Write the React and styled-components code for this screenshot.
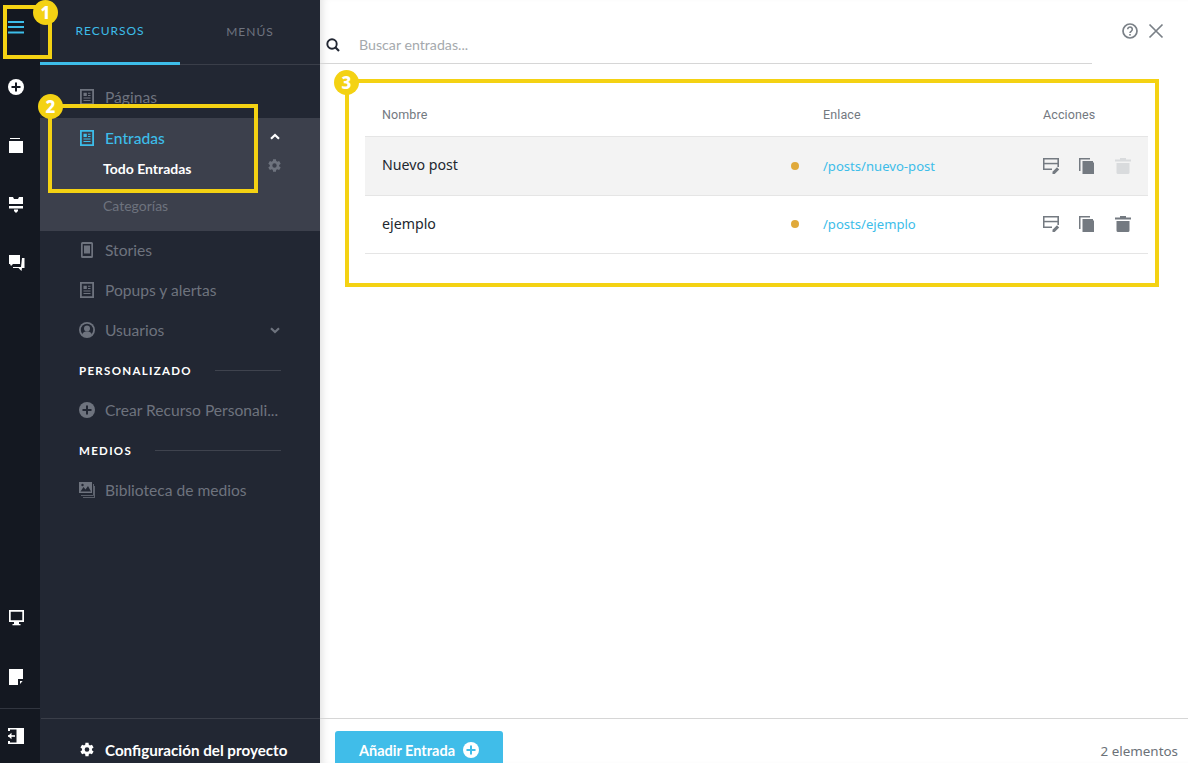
import React from "react";
import styled, { createGlobalStyle } from "styled-components";

const Global = createGlobalStyle`
  html, body { margin: 0; padding: 0; height: 763px; overflow: hidden; background: #fff; }
  #root { height: 763px; }
  * { box-sizing: border-box; }
`;
const Page = styled.div`
  position: relative; display: flex; width: 1188px; height: 763px; overflow: hidden;
  font-family: Lato, "Noto Sans", sans-serif;
`;
const Rail = styled.nav`
  width: 40px; flex: none; background: #141821; display: flex; flex-direction: column; align-items: center;
`;
const RailItem = styled.div`
  width: 40px; height: ${p => p.$h || 59}px; flex: none; display: flex; align-items: center; justify-content: center; color: #fff;
  padding-bottom: ${p => p.$pb || 0}px; padding-right: 8px;
`;
const RailBottom = styled.div`
  margin-top: auto; width: 40px; display: flex; flex-direction: column;
`;
const RailExit = styled(RailItem)`
  border-top: 1px solid #31353f; height: 55px; margin-top: 1px;
`;
const Sidebar = styled.aside`
  width: 280px; flex: none; background: #222733; display: flex; flex-direction: column; position: relative; z-index: 2;
`;
const Tabs = styled.div`
  display: flex; height: 65px; flex: none; border-bottom: 1px solid #3a3e49;
`;
const Tab = styled.div`
  width: 140px; height: 65px; display: flex; align-items: center; justify-content: center; padding-bottom: 2px;
  font-size: 12px; letter-spacing: 1px; font-weight: 400;
  color: ${p => p.$active ? "#3dbde9" : "#6f7480"};
  border-bottom: ${p => p.$active ? "3px solid #3dbde9" : "none"};
`;
const Menu = styled.div`
  padding-top: 12px; display: flex; flex-direction: column; flex: 1;
`;
const Item = styled.div`
  height: 40px; flex: none; display: flex; align-items: center; gap: 10px; padding: 0 39px;
  font-size: 15.6px; color: ${p => p.$active ? "#3dbde9" : "#6e737e"};
  font-weight: ${p => p.$active ? 500 : 400};
  justify-content: flex-start;
`;
const ItemIcon = styled.span`
  width: 16px; height: 16px; flex: none; display: flex; align-items: center; justify-content: center;
`;
const ItemText = styled.span`
  flex: 1; white-space: nowrap;
`;
const Active = styled.div`
  background: #3c404c; height: 113px; flex: none; margin: 1px 0 -1px; position: relative;
`;
const ActiveItem = styled(Item)`
  height: 39px;
`;
const SubItem = styled.div`
  height: ${p => p.$h}px; padding-left: 63px; display: flex; align-items: center;
  font-size: 14px; font-weight: ${p => p.$on ? 700 : 400}; color: ${p => p.$on ? "#fff" : "#6e737e"};
`;
const FloatingControl = styled.span`
  position: absolute; left: ${p => p.$left}px; top: ${p => p.$top}px; color: ${p => p.$c}; display: flex;
`;
const UsersCaret = styled.span`
  display: flex; color: #6e737e; margin-right: 1px;
`;
const Section = styled.div`
  height: 40px; flex: none; display: flex; align-items: center; gap: 23px; padding: 0 39px;
  font-size: 11.5px; font-weight: 700; letter-spacing: 1.3px; color: #fff;
  &::after { content: ""; flex: 1; height: 1px; background: #3f434e; }
`;
const Foot = styled.div`
  height: 45px; flex: none; margin-left: 1px; border-top: 1px solid #3a3e49; display: flex; align-items: center; gap: 10px;
  padding: 17px 38px 0; color: #fff; font-size: 15.2px; font-weight: 700; white-space: nowrap;
`;
const Main = styled.main`
  flex: 1; min-width: 0; display: flex; flex-direction: column; position: relative;
  box-shadow: inset 8px 0 8px -6px rgba(0,0,0,.13);
`;
const SearchRow = styled.div`
  height: 64px; flex: none; margin-right: 96px; border-bottom: 1px solid #d6d6d6; display: flex; align-items: center; gap: 19px;
  padding: 26px 0 0 6px; color: #a5a9ad; font-size: 14.2px;
`;
const TopActions = styled.div`
  position: absolute; right: 24px; top: 23px; display: flex; align-items: center; gap: 10px; color: #7a8087;
`;
const TableWrap = styled.div`
  margin: 28px 40px 0 45px; flex: none;
`;
const Row = styled.div`
  display: grid; grid-template-columns: 409px 32px 220px 1fr; align-items: center; height: ${p => p.$h}px;
  padding-left: 17px; background: ${p => p.$bg || "transparent"}; border-bottom: 1px solid #e5e5e5;
  font-family: Roboto, sans-serif;
`;
const Head = styled.span`
  font-size: 12.5px; color: #73797f; letter-spacing: .12px;
`;
const Name = styled.span`
  font-family: "Noto Sans", sans-serif; font-size: 14.2px; color: #22272e; margin-top: -3px;
`;
const Dot = styled.span`
  width: 8px; height: 8px; border-radius: 50%; background: #e0a93a; margin-top: -1px;
`;
const LinkText = styled.span`
  font-size: 13.1px; color: #3dbde9; font-family: "Noto Sans", sans-serif; margin-top: -1px;
`;
const Actions = styled.div`
  display: flex; gap: 19px; align-items: center; margin-top: -1px;
`;
const Footer = styled.div`
  margin-top: auto; height: 45px; flex: none; border-top: 1px solid #d6d6d6; display: flex; align-items: flex-start;
  justify-content: space-between; padding: 12px 10px 0 15px;
`;
const AddButton = styled.div`
  width: 168px; height: 50px; border-radius: 3px; background: #40bde9; color: #fff; font-size: 14.5px; font-weight: 700;
  display: flex; justify-content: center; gap: 8px; padding-top: 11px; line-height: 18px;
`;
const Count = styled.span`
  font-size: 13.4px; color: #6b7178; padding-top: 11px; font-family: "Noto Sans", sans-serif;
`;
const Mark = styled.div`
  position: absolute; left: ${p => p.$x}px; top: ${p => p.$y}px; width: ${p => p.$w}px; height: ${p => p.$h}px;
  border: 4px solid #f4d213; z-index: 5; pointer-events: none;
`;
const Badge = styled.div`
  position: absolute; left: ${p => p.$x}px; top: ${p => p.$y}px; width: 25px; height: 25px; border-radius: 50%;
  background: #f4d213; color: #fff; z-index: 6; display: flex; align-items: center; justify-content: center;
  font-family: "Noto Sans", sans-serif; font-weight: 800; font-size: 17px;
`;

const S = ({ s = 16, children, vb = "0 0 24 24" }) => (
  <svg width={s} height={s} viewBox={vb} fill="currentColor" style={{ display: "block" }}>{children}</svg>
);
const Burger = () => (
  <svg width="16" height="13" viewBox="0 0 16 13" fill="#3dbde9" style={{ display: "block" }}>
    <rect y="0" width="16" height="2" /><rect y="5" width="16" height="2" /><rect y="10.500" width="16" height="2" />
  </svg>
);
const PlusCircle = ({ s = 16, fg = "#141821" }) => (
  <svg width={s} height={s} viewBox="0 0 16 16" style={{ display: "block" }}>
    <circle cx="8" cy="8" r="8" fill="currentColor" />
    <rect x="3.500" y="7" width="9" height="2" fill={fg} /><rect x="7" y="3.500" width="2" height="9" fill={fg} />
  </svg>
);
const Layers = () => (
  <S s={16} vb="0 0 16 16"><rect x="2" y="0" width="10" height="1" /><rect x="1" y="3" width="14" height="12" /></S>
);
const Brush = () => (
  <S s={16} vb="0 0 16 16">
    <path d="M1 0h4l1 2h4l1-2h4v7H1z" /><rect x="1" y="9" width="14" height="2.500" /><path d="M6 12.500h4V14l-2 2-2-2z" />
  </S>
);
const Chat = () => (
  <S s={17} vb="0 0 17 17">
    <path d="M1 0h11v9H5l-2 2-1-2H1z" /><path d="M14 3h2.500v10H14l-.5 3-3-3H5v-1h8z" />
  </S>
);
const Monitor = () => (
  <S s={17} vb="0 0 17 17">
    <path fillRule="evenodd" d="M1 1h15v12H1zM2.700 2.700v8.600h11.600V2.700z" /><rect x="6" y="13" width="5" height="2" /><rect x="4.500" y="15" width="8" height="1.300" />
  </S>
);
const Note = () => (
  <S s={16} vb="0 0 16 16"><path d="M1 0h14v10h-5v6H1z" /><path d="M12 12h2.600L12 15z" /></S>
);
const Exit = () => (
  <S s={16} vb="0 0 16 16">
    <path fillRule="evenodd" d="M0 0h16v16H0v-3h2v1.500h6.500v-13H2V3H0z" />
    <path d="M0 7.200h7v1.600H0z" /><path d="M0 8l3.500-3.200v6.400z" />
  </S>
);
const Doc = () => (
  <svg width="14" height="16" viewBox="0 0 14 16" style={{ display: "block" }}>
    <path fill="currentColor" fillRule="evenodd" d="M0 0h14v16H0zM1.800 1.800v12.400h10.400V1.800z" />
    <path fill="currentColor" d="M3.500 3.700h3.300v3.400H3.500zM8 3.700h2.500v1H8zM8 6h2.500v1H8zM3.500 8.600h7v1h-7zM3.500 11h7v1h-7z" />
  </svg>
);
const Phone = () => (
  <svg width="12" height="16" viewBox="0 0 12 16" style={{ display: "block" }}>
    <path fill="currentColor" fillRule="evenodd" d="M1.500 0h9A1.500 1.500 0 0 1 12 1.500v13a1.500 1.500 0 0 1-1.500 1.500h-9A1.500 1.500 0 0 1 0 14.500v-13A1.500 1.500 0 0 1 1.500 0zM1.700 2v12h8.600V2z" />
    <rect fill="currentColor" x="3" y="3.500" width="6" height="8" />
  </svg>
);
const User = () => (
  <svg width="16" height="16" viewBox="0 0 16 16" style={{ display: "block" }}>
    <circle cx="8" cy="8" r="8" fill="currentColor" />
    <circle cx="8" cy="8" r="6.200" fill="#222733" />
    <circle cx="8" cy="6.500" r="3" fill="currentColor" />
    <path fill="currentColor" d="M3 12.500c1-2.500 3-3 5-3s4 .5 5 3L10.500 15h-5z" />
  </svg>
);
const Media = () => (
  <svg width="16" height="16" viewBox="0 0 16 16" style={{ display: "block" }}>
    <path fill="currentColor" d="M0 0h13v11H0z" />
    <path fill="#222733" d="M1.500 9.500 4.500 5l2 2.500L9 4l3 5.500z" />
    <circle cx="3.500" cy="3" r="1.200" fill="#222733" />
    <path fill="currentColor" d="M14 2h.8v11.800H2V13h12zM15.200 4h.8v11.800H4V15h11.200z" />
  </svg>
);
const Gear = ({ s = 16 }) => (
  <S s={s} vb="0 0 24 24">
    <path d="M19.400 13a7.500 7.500 0 0 0 0-2l2.500-2-2.500-4.300-3 1.200a7.500 7.500 0 0 0-1.700-1L14.300 2H9.700l-.4 2.900a7.500 7.500 0 0 0-1.700 1l-3-1.200L2.100 9l2.500 2a7.500 7.500 0 0 0 0 2l-2.500 2 2.500 4.300 3-1.200a7.500 7.500 0 0 0 1.700 1l.4 2.900h4.600l.4-2.900a7.500 7.500 0 0 0 1.700-1l3 1.200 2.500-4.300zM12 15.500a3.500 3.500 0 1 1 0-7 3.500 3.500 0 0 1 0 7z" />
  </S>
);
const Chevron = ({ up }) => (
  <svg width="10" height="7" viewBox="0 0 10 7" style={{ display: "block", transform: up ? "rotate(180deg)" : "none" }}>
    <path d="M1 1.200 5 5l4-3.800" fill="none" stroke="currentColor" strokeWidth="2.200" />
  </svg>
);
const Search = () => (
  <svg width="14" height="14" viewBox="0 0 14 14" style={{ display: "block" }}>
    <circle cx="6" cy="6" r="4.700" fill="none" stroke="#222733" strokeWidth="1.900" />
    <path d="M9.300 9.300 13 13" stroke="#222733" strokeWidth="2.200" />
  </svg>
);
const Help = () => (
  <svg width="16" height="16" viewBox="0 0 16 16" style={{ display: "block" }}>
    <circle cx="8" cy="8" r="7" fill="none" stroke="currentColor" strokeWidth="1.700" />
    <path d="M5.700 6.300a2.300 2.300 0 1 1 3.600 1.900c-.8.500-1.300 1-1.300 1.800" fill="none" stroke="currentColor" strokeWidth="1.600" />
    <rect x="7.200" y="11" width="1.600" height="1.600" fill="currentColor" />
  </svg>
);
const Close = () => (
  <svg width="16" height="16" viewBox="0 0 16 16" style={{ display: "block" }}>
    <path d="M1.500 1.500l13 13M14.500 1.500l-13 13" stroke="currentColor" strokeWidth="1.700" />
  </svg>
);
const Edit = () => (
  <svg width="17" height="16" viewBox="0 0 17 16" style={{ display: "block", color: "#747a81" }}>
    <path fill="currentColor" d="M0 0h16v9h-1.600V1.500H1.500v9H9V12H0z" />
    <path fill="currentColor" d="M1 4.800h14v1.500H1z" />
    <path fill="currentColor" d="M9.500 16v-2.200l4.500-4.500L16.200 11.500 11.700 16z" />
  </svg>
);
const Copy = () => (
  <svg width="15" height="16" viewBox="0 0 15 16" style={{ display: "block", color: "#747a81" }}>
    <path fill="currentColor" d="M0 0h11v1.500H1.500V13H0z" />
    <path fill="currentColor" d="M3.500 3H14v1l1 1v11H3.500z" />
  </svg>
);
const Trash = ({ off }) => (
  <svg width="16" height="16" viewBox="0 0 16 16" style={{ display: "block", color: off ? "#d9dbdd" : "#747a81", marginLeft: 2 }}>
    <path fill="currentColor" d="M5 0h6v1.500h5V3.500H0V1.500h5zM1.500 5h13v9.500a1.500 1.500 0 0 1-1.500 1.500H3a1.500 1.500 0 0 1-1.500-1.500z" />
  </svg>
);

const ActionSet = ({ off }) => (
  <Actions><Edit /><Copy /><Trash off={off} /></Actions>
);

export default function App() {
  return (
    <Page>
      <Global />
      <Rail>
        <RailItem $h={57} $pb={3}><Burger /></RailItem>
        <RailItem><PlusCircle /></RailItem>
        <RailItem><Layers /></RailItem>
        <RailItem><Brush /></RailItem>
        <RailItem><Chat /></RailItem>
        <RailBottom>
          <RailItem $h={60}><Monitor /></RailItem>
          <RailItem $h={60}><Note /></RailItem>
          <RailExit><Exit /></RailExit>
        </RailBottom>
      </Rail>
      <Sidebar>
        <Tabs>
          <Tab $active>RECURSOS</Tab>
          <Tab>MENÚS</Tab>
        </Tabs>
        <Menu>
          <Item><ItemIcon><Doc /></ItemIcon><ItemText>Páginas</ItemText></Item>
          <Active>
            <ActiveItem $active><ItemIcon><Doc /></ItemIcon><ItemText>Entradas</ItemText></ActiveItem>
            <SubItem $on $h={23}>Todo Entradas</SubItem>
            <SubItem $h={51}>Categorías</SubItem>
            <FloatingControl $left={230} $top={15} $c="#fff"><Chevron up /></FloatingControl>
            <FloatingControl $left={227} $top={40} $c="#6e737e"><Gear s={15} /></FloatingControl>
          </Active>
          <Item><ItemIcon><Phone /></ItemIcon><ItemText>Stories</ItemText></Item>
          <Item><ItemIcon><Doc /></ItemIcon><ItemText>Popups y alertas</ItemText></Item>
          <Item><ItemIcon><User /></ItemIcon><ItemText>Usuarios</ItemText><UsersCaret><Chevron /></UsersCaret></Item>
          <Section>PERSONALIZADO</Section>
          <Item><ItemIcon><PlusCircle fg="#222733" /></ItemIcon><ItemText>Crear Recurso Personali...</ItemText></Item>
          <Section>MEDIOS</Section>
          <Item><ItemIcon><Media /></ItemIcon><ItemText>Biblioteca de medios</ItemText></Item>
        </Menu>
        <Foot><ItemIcon><Gear s={19} /></ItemIcon>Configuración del proyecto</Foot>
      </Sidebar>
      <Main>
        <SearchRow><Search />Buscar entradas...</SearchRow>
        <TopActions><Help /><Close /></TopActions>
        <TableWrap>
          <Row $h={45}><Head>Nombre</Head><span /><Head>Enlace</Head><Head>Acciones</Head></Row>
          <Row $h={59} $bg="#f3f3f3"><Name>Nuevo post</Name><Dot /><LinkText>/posts/nuevo-post</LinkText><ActionSet off /></Row>
          <Row $h={58}><Name>ejemplo</Name><Dot /><LinkText>/posts/ejemplo</LinkText><ActionSet /></Row>
        </TableWrap>
        <Footer>
          <AddButton>Añadir Entrada <PlusCircle fg="#40bde9" /></AddButton>
          <Count>2 elementos</Count>
        </Footer>
      </Main>
      <Mark $x={3} $y={5} $w={49} $h={54} />
      <Mark $x={48} $y={104} $w={210} $h={89} />
      <Mark $x={345} $y={79} $w={814} $h={208} />
      <Badge $x={33} $y={0}>1</Badge>
      <Badge $x={38} $y={94}>2</Badge>
      <Badge $x={334} $y={70}>3</Badge>
    </Page>
  );
}
